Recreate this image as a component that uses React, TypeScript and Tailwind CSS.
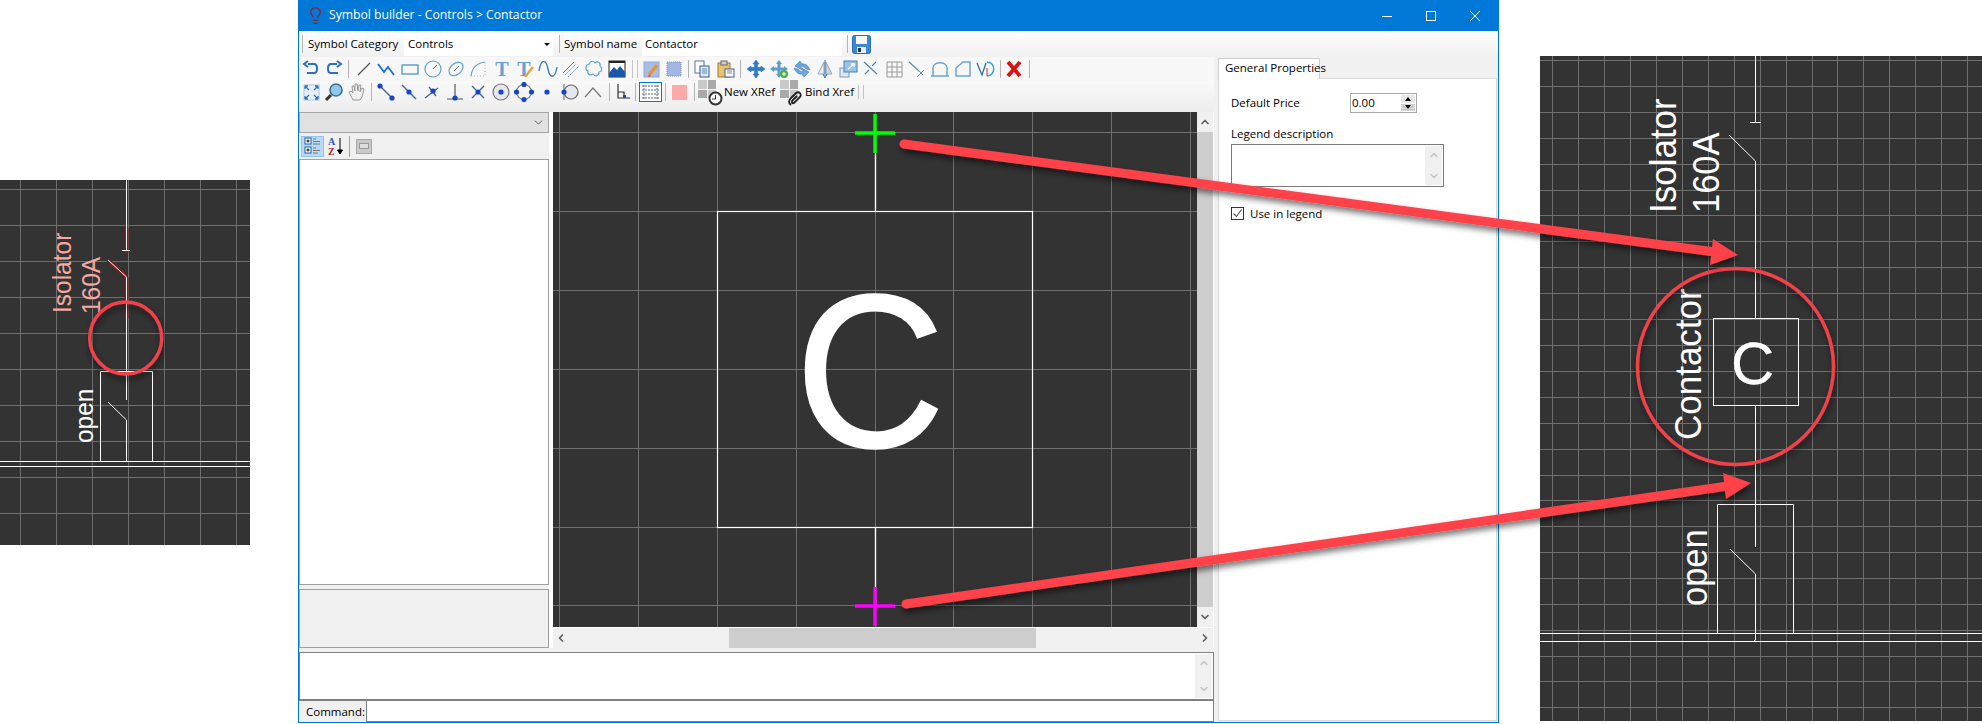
import type { ReactNode } from "react";
import { ChevronDown, ChevronLeft, ChevronRight, ChevronUp, Lightbulb } from "lucide-react";

const blue = "#2a6fc0";
const dot = "#1446c8";
const gridLine = "#6f6f6f";

function Ico({ children }: { children: ReactNode }) {
  return (
    <svg width="20" height="20" viewBox="0 0 20 20" fill="none">
      {children}
    </svg>
  );
}

function Btn({ children }: { children: ReactNode }) {
  return <div className="w-[23px] h-[22px] shrink-0 flex items-center justify-center">{children}</div>;
}

function Sep({ className }: { className: string }) {
  return (
    <div className={`${className} h-[18px] shrink-0 flex justify-center`}>
      <div className="w-px h-full bg-[#b4b4b4]" />
    </div>
  );
}

function DoubleSep() {
  return (
    <div className="w-[13px] h-[18px] shrink-0 flex justify-center gap-1">
      <div className="w-px h-full bg-[#c4c4c4]" />
      <div className="w-px h-full bg-[#c4c4c4]" />
    </div>
  );
}

function DrawRow() {
  return (
    <div className="h-[24px] flex items-center bg-[#f7f7f7]">
      <Btn><Ico><path d="M7 5 H13 C17 5 17 14 13 14 H6 M7 2 L3 5 L7 8" stroke={blue} strokeWidth="2" /></Ico></Btn>
      <Btn><Ico><path d="M13 5 H7 C3 5 3 14 7 14 H14 M13 2 L17 5 L13 8" stroke={blue} strokeWidth="2" /></Ico></Btn>
      <Sep className="w-[7px]" />
      <Btn><Ico><path d="M4 16 L16 4" stroke="#555" strokeWidth="1.2" /></Ico></Btn>
      <Btn><Ico><path d="M1 5 L7 13 L11 8 L17 16" stroke="#1c6fd0" strokeWidth="1.8" /></Ico></Btn>
      <Btn><Ico><rect x="2" y="6" width="16" height="9" stroke="#3f8bc8" strokeWidth="1.2" /></Ico></Btn>
      <Btn><Ico><circle cx="10" cy="10" r="8" stroke="#5fa3d0" strokeWidth="1.2" /><path d="M10 10 L14 6" stroke="#555" /></Ico></Btn>
      <Btn><Ico><ellipse cx="10" cy="10" rx="8" ry="5.5" transform="rotate(-40 10 10)" stroke="#5fa3d0" strokeWidth="1.2" /><path d="M8 12 L13 7" stroke="#777" /></Ico></Btn>
      <Btn><Ico><path d="M2 17 C3 8 9 4 16 3" stroke="#5fa3d0" strokeWidth="1.2" /><path d="M2 17 H16 V3" stroke="#aaa" strokeDasharray="1 2" /></Ico></Btn>
      <Btn><Ico><text x="10" y="17" textAnchor="middle" fontSize="20" fontWeight="700" fontFamily="Liberation Serif" fill="#6aa0cf">T</text></Ico></Btn>
      <Btn><Ico><text x="9" y="17" textAnchor="middle" fontSize="20" fontWeight="700" fontFamily="Liberation Serif" fill="#6aa0cf">T</text><path d="M10 18 L18 8" stroke="#e8a33a" strokeWidth="2.4" /></Ico></Btn>
      <Btn><Ico><path d="M1 12 C3 -1 8 0 10 10 C12 20 17 20 19 8" stroke="#3d7fb5" strokeWidth="1.4" /></Ico></Btn>
      <Btn><Ico><path d="M2 14 L13 3" stroke="#d65b5b" /><path d="M4 16 L15 5" stroke="#68b868" strokeDasharray="2 1" /><path d="M7 18 L18 7" stroke="#6d95cc" strokeDasharray="2 1" /></Ico></Btn>
      <Btn><Ico><path d="M5 5 C7 1 10 2 11 4 C13 2 17 3 16 7 C19 9 18 13 15 13 C15 17 11 18 9 15 C6 17 3 15 4 12 C1 11 1 6 5 5 Z" stroke="#5fa3d0" strokeWidth="1.2" /></Ico></Btn>
      <Btn><Ico><rect x="2" y="2" width="16" height="16" fill="#fff" stroke="#222" /><path d="M2 18 L2 14 L7 8 L10 11 L13 7 L18 13 V18 Z" fill="#1b57a8" /><rect x="2" y="2" width="16" height="2" fill="#222" /></Ico></Btn>
      <DoubleSep />
      <div className="w-[22px] h-[22px] shrink-0 flex items-center justify-center">
        <Ico><rect x="2" y="3" width="15" height="15" fill="#a9bce8" stroke="#8fa7dd" /><path d="M7 16 L15 6" stroke="#e8962e" strokeWidth="3.4" /><path d="M7 16 L6 18 L9 17" fill="#c33" /></Ico>
      </div>
      <div className="w-[22px] h-[22px] shrink-0 flex items-center justify-center">
        <Ico><rect x="3" y="3" width="14" height="14" fill="#a3b6e6" stroke="#7f93c9" strokeDasharray="1 1" /></Ico>
      </div>
      <Sep className="w-[6px]" />
      <div className="w-[22px] h-[22px] shrink-0 flex items-center justify-center">
        <Ico><rect x="3" y="2" width="9" height="12" fill="#fff" stroke="#5577aa" /><rect x="8" y="7" width="9" height="11" fill="#dfe9f7" stroke="#335c99" /><path d="M10 10 H15 M10 12 H15 M10 14 H15" stroke="#6688bb" /></Ico>
      </div>
      <div className="w-[2px] shrink-0" />
      <div className="w-[22px] h-[22px] shrink-0 flex items-center justify-center">
        <Ico><rect x="2" y="4" width="12" height="14" fill="#e7c46b" stroke="#9c7b2c" /><rect x="5" y="2" width="6" height="4" fill="#cfcfcf" stroke="#666" /><rect x="9" y="10" width="9" height="8" fill="#fff" stroke="#44618f" /><path d="M11 12 H16 M11 14 H16" stroke="#6688bb" /></Ico>
      </div>
      <Sep className="w-[7px]" />
      <Btn><Ico><path d="M10 1 L13 5 H11.5 V8.5 H15 V7 L19 10 L15 13 V11.5 H11.5 V15 H13 L10 19 L7 15 H8.5 V11.5 H5 V13 L1 10 L5 7 V8.5 H8.5 V5 H7 Z" fill="#2f7cc8" stroke="#1b5fa5" strokeWidth=".5" /></Ico></Btn>
      <Btn><Ico><path d="M10 1 L13 5 H11.5 V8.5 H15 V7 L19 10 L15 13 V11.5 H11.5 V15 H13 L10 19 L7 15 H8.5 V11.5 H5 V13 L1 10 L5 7 V8.5 H8.5 V5 H7 Z" fill="#5d9bd2" /><circle cx="15" cy="15" r="4" fill="#4cae4c" /><path d="M13 15 H17 M15 13 V17" stroke="#fff" /></Ico></Btn>
      <Btn><Ico><path d="M3 7 L8 2 L10 5 C14 4 17 8 18 11 L14 10 C13 8 11 7 9 8 L10 11 Z M17 13 L12 18 L10 15 C6 16 3 12 2 9 L6 10 C7 12 9 13 11 12 L10 9 Z" fill="#6ba4d8" stroke="#3a7ab8" strokeWidth=".5" /></Ico></Btn>
      <Btn><Ico><path d="M9 3 V15 H3 Z" fill="#e9edf1" stroke="#9aa5ad" /><path d="M11 3 V15 H17 Z" fill="#cfd6dc" stroke="#9aa5ad" /><path d="M10 1 V17 M8 15 L10 19 L12 15" stroke="#2a6fc0" /></Ico></Btn>
      <Btn><Ico><rect x="2" y="9" width="9" height="9" fill="#dfe8f2" stroke="#7b9bbb" /><rect x="6" y="2" width="13" height="11" fill="#9cc3e6" stroke="#3f83bf" /><path d="M10 10 L16 5 M13 5 H16 V8" stroke="#fff" strokeWidth="1.4" /></Ico></Btn>
      <Btn><Ico><path d="M3 3 L16 15 M15 3 L11 7 M8 11 L4 15" stroke="#4d7fa8" strokeWidth="1.1" /></Ico></Btn>
      <Btn><Ico><path d="M3 3 H18 V18 H3 Z M8 3 V18 M13 3 V18 M3 8 H18 M3 13 H18" stroke="#9a9a9a" /></Ico></Btn>
      <Btn><Ico><path d="M2 3 L12 12" stroke="#4d8ec0" strokeWidth="1.2" /><path d="M12 12 L16 16 M17 11 L10 18" stroke="#888" /></Ico></Btn>
      <Btn><Ico><path d="M3 17 V9 C3 2 17 2 17 9 V17 M1 17 H19" stroke="#6aa5cb" strokeWidth="1.5" /></Ico></Btn>
      <Btn><Ico><path d="M3 9 L10 3 H17 V17 H3 Z" stroke="#6aa5cb" strokeWidth="1.5" /></Ico></Btn>
      <Btn><Ico><path d="M1 4 L6 16 L10 4" stroke="#2a6fa8" strokeWidth="1.3" /><path d="M11 3 C20 3 20 17 11 17" stroke="#27a3dd" strokeWidth="1.4" /><path d="M11 9 V17" stroke="#b53a3a" /></Ico></Btn>
      <Sep className="w-[6px]" />
      <div className="w-[22px] h-[22px] shrink-0 flex items-center justify-center">
        <Ico><path d="M4 3 L16 17 M16 3 L4 17" stroke="#e01010" strokeWidth="3.8" /></Ico>
      </div>
      <Sep className="w-[8px]" />
    </div>
  );
}

function SnapDot({ cx, cy }: { cx: number; cy: number }) {
  return <circle cx={cx} cy={cy} r="2.6" fill={dot} />;
}

function ViewRow() {
  return (
    <div className="h-[31px] pb-[9px] pt-0 flex items-center bg-gradient-to-b from-[#f9f9f9] to-[#ededed]">
      <Btn><Ico><rect x="3" y="3" width="15" height="15" fill="#e8eff8" stroke="#b5c4d8" /><path d="M4 4 L8 8 M4 4 H7 M4 4 V7 M17 4 L13 8 M17 4 H14 M17 4 V7 M4 17 L8 13 M4 17 H7 M4 17 V14 M17 17 L13 13 M17 17 H14 M17 17 V14" stroke="#2a72c2" strokeWidth="1.3" /></Ico></Btn>
      <Btn><Ico><circle cx="12" cy="8" r="6" fill="#8fc8ea" stroke="#3d6f96" strokeWidth="1.6" /><path d="M7 13 L2 18" stroke="#333" strokeWidth="3" /></Ico></Btn>
      <Btn><Ico><path d="M6 18 L2 10 L4 9 L6 11 L5 4 L7 4 L8 9 L8 2 L10 2 L11 9 L12 3 L14 3 L13 10 L15 6 L17 7 L15 15 L13 18 Z" fill="#f0f0f0" stroke="#999" /></Ico></Btn>
      <Sep className="w-[6px]" />
      <Btn><Ico><path d="M3 3 L17 17" stroke="#44679c" strokeWidth="1.4" /><SnapDot cx={4} cy={4} /><SnapDot cx={16} cy={16} /></Ico></Btn>
      <Btn><Ico><path d="M3 3 L17 17" stroke="#44679c" strokeWidth="1.4" /><SnapDot cx={10} cy={10} /></Ico></Btn>
      <Btn><Ico><path d="M3 16 L16 6 M7 5 L14 14" stroke="#44679c" strokeWidth="1.4" /><SnapDot cx={11} cy={9} /></Ico></Btn>
      <Btn><Ico><path d="M10 2 V17 M2 17 H18" stroke="#555" strokeWidth="1.2" /><SnapDot cx={10} cy={16} /></Ico></Btn>
      <Btn><Ico><path d="M4 4 L16 16 M16 4 L4 16" stroke="#44679c" strokeWidth="1.4" /><SnapDot cx={10} cy={10} /></Ico></Btn>
      <Btn><Ico><circle cx="10" cy="10" r="8" fill="#e6e6ee" stroke="#777" strokeWidth="1.2" /><SnapDot cx={10} cy={10} /></Ico></Btn>
      <Btn><Ico><circle cx="10" cy="10" r="7.5" stroke="#777" strokeWidth="1.2" /><SnapDot cx={10} cy={2.5} /><SnapDot cx={10} cy={17.5} /><SnapDot cx={2.5} cy={10} /><SnapDot cx={17.5} cy={10} /></Ico></Btn>
      <Btn><Ico><SnapDot cx={10} cy={10} /></Ico></Btn>
      <Btn><Ico><circle cx="11" cy="10" r="7" fill="#e6e6ee" stroke="#666" strokeWidth="1.2" /><path d="M4 2 V18" stroke="#666" /><SnapDot cx={4} cy={10} /></Ico></Btn>
      <Btn><Ico><path d="M2 15 L10 6 L18 15" stroke="#777" strokeWidth="1.2" /></Ico></Btn>
      <Sep className="w-[10px]" />
      <div className="w-[17px] h-[22px] shrink-0 flex items-center justify-center">
        <svg width="16" height="18" viewBox="0 0 16 18" fill="none"><path d="M3 1 V15 H15 M3 9 H9 V15" stroke="#333" strokeWidth="1.2" /><rect x="8" y="12" width="3" height="3" fill={dot} /></svg>
      </div>
      <Sep className="w-[8px]" />
      <div className="w-[23px] h-[20px] shrink-0 border border-[#0078d7] bg-[#fbfbfb] flex items-center justify-center">
        <svg width="17" height="14" viewBox="0 0 17 14" fill="none"><path d="M0 1 H17 M0 5 H17 M0 9 H17 M0 13 H17 M2 0 V14 M15 0 V14" stroke="#5d6b86" strokeDasharray="2 1" /></svg>
      </div>
      <Sep className="w-[6px]" />
      <div className="w-[22px] h-[22px] shrink-0 flex items-center justify-center">
        <div className="w-[15px] h-[15px] bg-[#ffa8a8]" />
      </div>
      <Sep className="w-[8px]" />
      <div className="w-[26px] h-[24px] shrink-0 relative">
        <XrefTiles />
        <svg className="absolute right-[1px] bottom-[-2px]" width="15" height="15" viewBox="0 0 15 15" fill="#fff"><circle cx="7.5" cy="7.5" r="6" stroke="#333" strokeWidth="2" /><path d="M7.5 4 V8 H4" stroke="#333" fill="none" /></svg>
      </div>
      <span className="text-[11.5px] leading-none text-black w-[56px] shrink-0 whitespace-nowrap">New XRef</span>
      <div className="w-[25px] h-[24px] shrink-0 relative">
        <XrefTiles />
        <svg className="absolute left-[7px] bottom-[-3px]" width="16" height="16" viewBox="0 0 16 16" fill="none"><path d="M4 14 C1 12 2 9 4 7 L9 2 C12 0 15 3 13 6 L7 12 C5 13 4 11 6 9 L10 5" stroke="#222" strokeWidth="1.8" /></svg>
      </div>
      <span className="text-[11.5px] leading-none text-black w-[53px] shrink-0 whitespace-nowrap">Bind Xref</span>
      <div className="w-[6px] h-[14px] shrink-0 flex gap-1">
        <div className="w-px h-full bg-[#c4c4c4]" />
        <div className="w-px h-full bg-[#c4c4c4]" />
      </div>
    </div>
  );
}

function XrefTiles() {
  return (
    <div className="grid grid-cols-2 gap-px w-[18px] h-[18px] absolute left-0 top-0">
      <div className="bg-[#c9c9c9]" />
      <div className="bg-[#a9a9a9]" />
      <div className="bg-[#a9a9a9]" />
      <div className="bg-[#c9c9c9]" />
    </div>
  );
}

function GridLines({ xs, ys, x0, x1, y0, y1 }: { xs: number[]; ys: number[]; x0: number; x1: number; y0: number; y1: number }) {
  return (
    <g stroke={gridLine} strokeWidth="1">
      {xs.map((x) => <line key={`x${x}`} x1={x + 0.5} x2={x + 0.5} y1={y0} y2={y1} />)}
      {ys.map((y) => <line key={`y${y}`} y1={y + 0.5} y2={y + 0.5} x1={x0} x2={x1} />)}
    </g>
  );
}

function steps(start: number, step: number, end: number) {
  const out: number[] = [];
  for (let v = start; v <= end; v += step) out.push(Math.round(v));
  return out;
}

// the labels in the picture are a little taller across than their length gives
function SideText({ x, y, size, fill, children }: { x: number; y: number; size: number; fill: string; children: string }) {
  return (
    <text transform={`translate(${x} ${y}) rotate(-90) scale(1 1.08)`} fontSize={size} fill={fill}>
      {children}
    </text>
  );
}

function LeftDrawing() {
  return (
    <svg className="w-[250px] h-[365px] mt-[180px] shrink-0 bg-[#333333] font-['Liberation_Sans',sans-serif]" viewBox="0 180 250 365">
      <GridLines xs={steps(20, 36, 250)} ys={steps(189, 36, 545)} x0={0} x1={250} y0={180} y1={545} />
      <path d="M126.5 228 V253 M126.5 277 V318 M108 260 L126.5 277" stroke="#7c1d1d" strokeWidth="4" fill="none" />
      <path d="M126.5 180 V250 M122 250.5 H130 M108 260 L126.5 277 V400 M126.5 420 V461 M108 402 L126.5 420" stroke="#ffffff" fill="none" />
      <path d="M100.5 461 V371.5 H152.5 V461" stroke="#ffffff" fill="none" />
      <path d="M0 461.5 H250 M0 466.5 H250" stroke="#ffffff" />
      <SideText x={71} y={313} size={24.5} fill="#f4a9a1">Isolator</SideText>
      <SideText x={100} y={314} size={24.5} fill="#f4a9a1">160A</SideText>
      <SideText x={93} y={443} size={24.5} fill="#ffffff">open</SideText>
    </svg>
  );
}

function RightDrawing() {
  return (
    <svg className="w-[442px] h-[665px] mt-[56px] ml-[41px] shrink-0 bg-[#333333] font-['Liberation_Sans',sans-serif]" viewBox="1540 56 442 665">
      <GridLines xs={steps(1552, 25.95, 1982)} ys={[...steps(60, 25.9, 371), ...steps(397, 25.85, 721)]} x0={1540} x1={1982} y0={56} y1={721} />
      <path d="M1755.5 56 V122 M1750 122.5 H1761 M1729 135 L1755.5 161 V318 M1755.5 405 V547 M1730 549 L1755.5 574 V640 L1754 641" stroke="#ffffff" fill="none" />
      <rect x="1713.5" y="318.5" width="85" height="87" stroke="#ffffff" fill="none" />
      <path d="M1717.5 633 V504.5 H1793.5 V633" stroke="#ffffff" fill="none" />
      <path d="M1540 633.5 H1982 M1540 641.5 H1982" stroke="#ffffff" />
      <text x="1731" y="384" fontSize="60" fill="#ffffff" stroke="#ffffff" strokeWidth="0.3">C</text>
      <SideText x={1676} y={213} size={35} fill="#ffffff">Isolator</SideText>
      <SideText x={1719} y={213} size={34.5} fill="#ffffff">160A</SideText>
      <SideText x={1701} y={440} size={35} fill="#ffffff">Contactor</SideText>
      <SideText x={1707} y={606} size={34.5} fill="#ffffff">open</SideText>
    </svg>
  );
}

function Canvas() {
  return (
    <svg className="w-[644px] h-[515px] shrink-0 bg-[#333333] font-['Liberation_Sans',sans-serif]" viewBox="553 112 644 515">
      <GridLines xs={[559, 638, 717, 796, 875, 953, 1032, 1111, 1190]} ys={[132, 211, 290, 369, 448, 527, 605]} x0={553} x1={1197} y0={112} y1={627} />
      <path d="M875.5 133 V211 M875.5 527 V606" stroke="#ffffff" strokeWidth="1.4" />
      <rect x="717.5" y="211.5" width="315" height="316" stroke="#ffffff" strokeWidth="1.2" fill="none" />
      <text transform="translate(795 447) scale(0.95 1)" fontSize="219" fill="#ffffff" stroke="#ffffff" strokeWidth="1.6">C</text>
      <path d="M875 114 V153 M855 133 H895" stroke="#00ff00" strokeWidth="3.4" />
      <path d="M875 587 V626 M855 606 H895" stroke="#ff00ff" strokeWidth="3.4" />
    </svg>
  );
}

function TreePane() {
  return (
    <div className="w-[250px] h-[536px] shrink-0 flex flex-col bg-[#f0f0f0]">
      <div className="h-[21px] shrink-0 bg-[#e1e1e1] border border-[#a6a6a6] flex items-center justify-end pr-[3px]">
        <ChevronDown size={13} strokeWidth={1.6} className="text-[#444]" />
      </div>
      <div className="h-[26px] shrink-0 flex items-center pl-[2px]">
        <div className="w-[23px] h-[21px] bg-[#b8d9f6] border border-[#92c4ef] flex items-center justify-center">
          <svg width="18" height="18" viewBox="0 0 18 18" fill="none">
            <rect x="1" y="1" width="6" height="6" fill="#fff" stroke="#1c5fa8" />
            <rect x="1" y="10" width="6" height="6" fill="#fff" stroke="#1c5fa8" />
            <path d="M2.5 4 H5.5 M4 2.5 V5.5 M2.5 13 H5.5 M4 11.5 V14.5" stroke="#000" />
            <path d="M9 2 H12 M9 4.5 H16 M9 7 H16 M9 11 H12 M9 13.5 H16 M9 16 H14" stroke="#777" />
          </svg>
        </div>
        <div className="w-[20px] h-[21px] ml-[2px] flex items-center justify-center">
          <svg width="18" height="20" viewBox="0 0 18 20" fill="none">
            <text x="1" y="9" fontSize="10" fontWeight="700" fontFamily="Liberation Serif" fill="#2a52be">A</text>
            <text x="1" y="19" fontSize="10" fontWeight="700" fontFamily="Liberation Serif" fill="#a52a2a">Z</text>
            <path d="M13 2 V17 M10.5 14 L13 18 L15.5 14 Z" stroke="#000" fill="#000" />
          </svg>
        </div>
        <div className="w-px h-[21px] bg-[#a0a0a0] ml-[3px]" />
        <div className="w-[16px] h-[15px] ml-[6px] border border-[#a8a8a8] bg-[#c8c8c8] flex items-center justify-center">
          <div className="w-[10px] h-[6px] border border-[#9a9a9a] bg-[#dedede]" />
        </div>
      </div>
      <div className="flex-1 bg-white border border-[#a0a0a0]" />
      <div className="h-[59px] mt-[4px] mb-0 shrink-0 bg-[#f0f0f0] border border-[#a0a0a0]" />
    </div>
  );
}

function CanvasColumn() {
  return (
    <div className="w-[660px] h-[536px] ml-[4px] shrink-0 flex flex-col bg-[#f0f0f0]">
      <div className="h-[515px] flex">
        <Canvas />
        <div className="w-[16px] flex flex-col items-center bg-[#f0f0f0]">
          <div className="h-[20px] flex items-center justify-center"><ChevronUp size={12} strokeWidth={3.4} className="text-[#606060]" /></div>
          <div className="w-full h-[475px] bg-[#cdcdcd]" />
          <div className="flex-1 flex items-center justify-center"><ChevronDown size={12} strokeWidth={3.4} className="text-[#606060]" /></div>
        </div>
      </div>
      <div className="h-[21px] border-t border-white flex items-center">
        <div className="w-[16px] flex justify-center"><ChevronLeft size={12} strokeWidth={3.4} className="text-[#606060]" /></div>
        <div className="w-[160px]" />
        <div className="w-[307px] h-full bg-[#cdcdcd]" />
        <div className="flex-1" />
        <div className="w-[16px] flex justify-center"><ChevronRight size={12} strokeWidth={3.4} className="text-[#606060]" /></div>
      </div>
    </div>
  );
}

function PropertiesPanel() {
  return (
    <div className="flex-1 flex flex-col bg-[#f0f0f0] pl-[4px] pr-px pb-px text-[11.5px] text-black">
      <div className="h-[21px] shrink-0 pt-px">
        <div className="w-[102px] h-[21px] bg-white border border-b-0 border-[#cfcfcf] flex items-center pl-[6px] pb-[2px] relative z-10 whitespace-nowrap">
          General Properties
        </div>
      </div>
      <div className="flex-1 bg-white border border-[#d9d9d9] pt-[14px] pl-[12px]">
        <div className="flex items-center h-[20px]">
          <span className="w-[119px]">Default Price</span>
          <div className="w-[67px] h-[20px] border border-[#a8a8a8] flex items-center pl-px justify-between pr-[1px]">
            0.00
            <div className="w-[14px] h-[16px] flex flex-col gap-px">
              <div className="flex-1 bg-[#e6e6e6] flex items-center justify-center">
                <div className="w-0 h-0 border-x-[3px] border-x-transparent border-b-[4px] border-b-black" />
              </div>
              <div className="flex-1 bg-[#d0d0d0] flex items-center justify-center">
                <div className="w-0 h-0 border-x-[3px] border-x-transparent border-t-[4px] border-t-black" />
              </div>
            </div>
          </div>
        </div>
        <div className="mt-[13px] h-[16px] leading-[16px]">Legend description</div>
        <div className="mt-[2px] w-[213px] h-[43px] border border-[#7a7a7a] flex justify-end p-px">
          <ScrollStrip />
        </div>
        <div className="mt-[20px] flex items-center h-[13px]">
          <div className="w-[13px] h-[13px] border border-[#333] flex items-center justify-center">
            <svg width="11" height="11" viewBox="0 0 11 11" fill="none"><path d="M1.5 5.5 L4.5 8.5 L9.5 1.5" stroke="#555" strokeWidth="1.1" /></svg>
          </div>
          <span className="ml-[6px]">Use in legend</span>
        </div>
      </div>
    </div>
  );
}

function ScrollStrip() {
  return (
    <div className="w-[17px] h-full bg-[#f0f0f0] flex flex-col items-center justify-between py-[3px]">
      <ChevronUp size={12} strokeWidth={3} className="text-[#c4c4c4]" />
      <ChevronDown size={12} strokeWidth={3} className="text-[#c4c4c4]" />
    </div>
  );
}

function AppWindow() {
  return (
    <div className="w-[1201px] h-[723px] ml-[48px] shrink-0 flex flex-col bg-white border-x border-b border-[#0078d7] text-[11.5px] text-black">
      {/* Title bar */}
      <div className="h-[31px] shrink-0 bg-[#0078d7] text-white flex items-center pl-[7px] text-[12.2px]">
        <Lightbulb size={19} strokeWidth={1.5} className="text-[#b01020] shrink-0" />
        <span className="ml-[4px] whitespace-nowrap">Symbol builder - Controls &gt; Contactor</span>
        <div className="flex-1" />
        <svg width="12" height="12" viewBox="0 0 12 12" className="shrink-0 mr-[32px]"><path d="M1 6.5 H11" stroke="#fff" /></svg>
        <svg width="12" height="12" viewBox="0 0 12 12" className="shrink-0 mr-[32px]" fill="none"><rect x="1.5" y="1.5" width="9" height="9" stroke="#fff" /></svg>
        <svg width="12" height="12" viewBox="0 0 12 12" className="shrink-0 mr-[17px]"><path d="M1 1 L11 11 M11 1 L1 11" stroke="#fff" /></svg>
      </div>

      {/* Symbol toolbar */}
      <div className="h-[26px] shrink-0 flex items-center bg-gradient-to-b from-white to-[#f0f0f0]">
        <div className="w-[3px]" />
        <div className="w-px h-[18px] bg-[#b4b4b4]" />
        <span className="ml-[5px] w-[96px] whitespace-nowrap">Symbol Category</span>
        <div className="w-[149px] h-[23px] bg-white flex items-center justify-between pl-[4px] pr-[3px]">
          Controls
          <div className="w-0 h-0 border-x-[3px] border-x-transparent border-t-[3px] border-t-black" />
        </div>
        <div className="w-px h-[18px] bg-[#b4b4b4] ml-[6px]" />
        <span className="ml-[4px] w-[78px] whitespace-nowrap">Symbol name</span>
        <div className="w-[200px] h-[23px] bg-white flex items-center pl-[3px]">Contactor</div>
        <div className="w-px h-[18px] bg-[#b4b4b4] ml-[5px]" />
        <svg className="ml-[4px]" width="19" height="19" viewBox="0 0 19 19">
          <rect x="0.5" y="0.5" width="18" height="18" rx="2" fill="#3b86d6" stroke="#2a6cb5" />
          <rect x="4" y="1" width="11" height="8" fill="#f4f8fc" />
          <rect x="5" y="12" width="9" height="6" fill="#e8eef5" />
          <rect x="6" y="13" width="3" height="4" fill="#333" />
        </svg>
      </div>

      <div className="flex-1 flex min-h-0">
        <div className="w-[915px] shrink-0 flex flex-col">
          <DrawRow />
          <ViewRow />
          <div className="flex h-[536px] shrink-0">
            <TreePane />
            <CanvasColumn />
          </div>
          <div className="h-[4px] shrink-0 bg-[#f0f0f0]" />
          <div className="h-[49px] shrink-0 border border-[#808080] border-b-2 flex justify-end p-px">
            <ScrollStrip />
          </div>
          <div className="h-[21px] shrink-0 flex bg-[#f0f0f0]">
            <div className="w-[67px] pl-[7px] flex items-center whitespace-nowrap">Command:</div>
            <div className="flex-1 bg-white border border-[#808080] border-t-0" />
          </div>
        </div>
        <PropertiesPanel />
      </div>
    </div>
  );
}

function Annotations() {
  return (
    <svg className="absolute inset-0 pointer-events-none" width="1982" height="724" viewBox="0 0 1982 724" fill="none">
      <defs>
        <filter id="soft" x="-5%" y="-20%" width="110%" height="140%">
          <feDropShadow dx="1" dy="4" stdDeviation="3" floodColor="#000" floodOpacity="0.55" />
        </filter>
      </defs>
      <g filter="url(#soft)">
        <circle cx="125.7" cy="338" r="36" stroke="#f4404a" strokeWidth="3.4" />
      </g>
      <g filter="url(#soft)">
        <circle cx="1735.5" cy="366.5" r="98" stroke="#f4404a" strokeWidth="3.4" />
      </g>
      <g filter="url(#soft)">
        <path d="M904 144 L1715 252" stroke="#ff4248" strokeWidth="9" strokeLinecap="round" />
        <path d="M1738 255 L1713 239 L1710 265 Z" fill="#ff4248" />
      </g>
      <g filter="url(#soft)">
        <path d="M906 604 L1728 486" stroke="#ff4248" strokeWidth="9" strokeLinecap="round" />
        <path d="M1751 483 L1723 473 L1726 499 Z" fill="#ff4248" />
      </g>
    </svg>
  );
}

export default function App() {
  return (
    <div className="relative w-[1982px] h-[724px] overflow-hidden bg-white flex font-['Open_Sans',sans-serif]">
      <LeftDrawing />
      <AppWindow />
      <RightDrawing />
      <Annotations />
    </div>
  );
}
